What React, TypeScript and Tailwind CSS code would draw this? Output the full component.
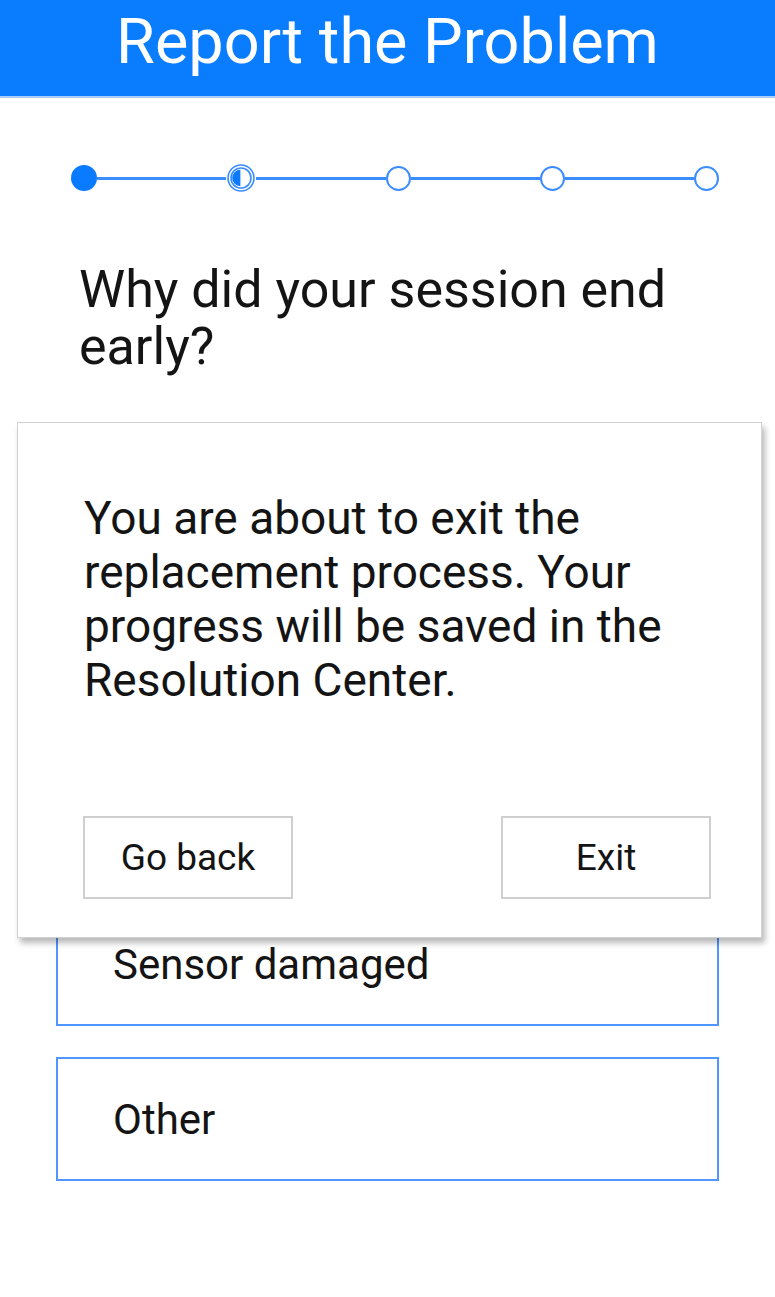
import React from "react";

/* Replacement flow, step 2 — the exit-confirmation dialog is open over the
 * reason list. */

const reasons = ["Sensor damaged", "Other"];

function StepDot({ state }: { state: "done" | "current" | "todo" }) {
  if (state === "done") {
    return <div className="h-[26px] w-[26px] shrink-0 rounded-full bg-[#0a7aff]" />;
  }
  if (state === "current") {
    return (
      <svg width="30" height="30" viewBox="0 0 30 30" className="shrink-0">
        <circle cx="15" cy="15" r="13" fill="white" stroke="#3b8dff" strokeWidth="1.6" />
        <circle cx="15" cy="15" r="10" fill="white" stroke="#3b8dff" strokeWidth="1.6" />
        <path d="M14.4 6.8 A8.2 8.2 0 0 0 14.4 23.2 Z" fill="#0a7aff" />
      </svg>
    );
  }
  return <div className="h-[25px] w-[25px] shrink-0 rounded-full border-2 border-[#3b8dff] bg-white" />;
}

function Connector() {
  return <div className="h-[3px] flex-1 bg-[#3b8dff]" />;
}

export default function App() {
  return (
    <div className="relative min-h-[1297px] w-[775px] bg-white font-['Roboto',sans-serif] text-[#141414]">
      <header className="h-[98px] border-b-2 border-[#a9cdff] bg-[#0a7dff] pt-[5px] text-center text-[63px] leading-[74px] text-white">
        Report the Problem
      </header>

      {/* stepper */}
      <div className="mt-[65px] flex items-center pl-[71px] pr-[56px]">
        <StepDot state="done" />
        <Connector />
        <StepDot state="current" />
        <Connector />
        <StepDot state="todo" />
        <Connector />
        <StepDot state="todo" />
        <Connector />
        <StepDot state="todo" />
      </div>

      <h1 className="mt-[68px] pl-[79px] pr-[50px] text-[52px] font-normal leading-[57px]">
        Why did your session end early?
      </h1>

      <ul className="mt-[527px] ml-[56px] flex w-[663px] flex-col gap-[31px]">
        {reasons.map((r) => (
          <li
            key={r}
            className="flex h-[124px] items-center border-2 border-[#4f96ff] pl-[55px] text-[42px]"
          >
            {r}
          </li>
        ))}
      </ul>

      {/* exit confirmation */}
      <div className="absolute left-[17px] top-[422px] flex h-[516px] w-[745px] flex-col border border-[#d2d2d2] bg-white shadow-[3px_5px_6px_rgba(0,0,0,0.28)]">
        <p className="w-[700px] pl-[66px] pt-[68px] text-[46px] leading-[54px]">
          You are about to exit the replacement process. Your progress will be saved in the Resolution Center.
        </p>
        <div className="mt-auto mb-[38px] ml-[65px] mr-[50px] flex justify-between">
          <button className="h-[83px] w-[210px] border-2 border-[#cfcfcf] bg-white text-[37px]">Go back</button>
          <button className="h-[83px] w-[210px] border-2 border-[#cfcfcf] bg-white text-[37px]">Exit</button>
        </div>
      </div>
    </div>
  );
}
